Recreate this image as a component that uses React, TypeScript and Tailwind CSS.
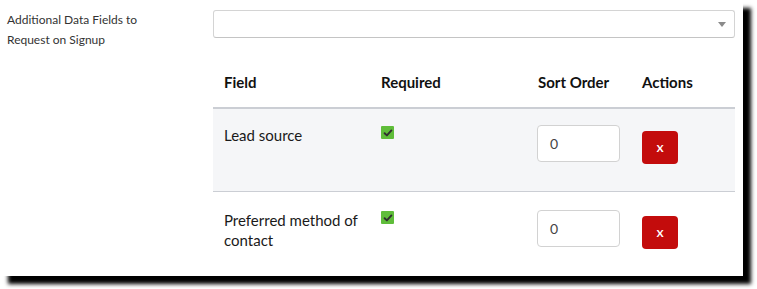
import React from 'react';

const rows = [
  { id: 1, name: ['Lead source'], required: true, order: 0, shaded: true },
  { id: 2, name: ['Preferred method of', 'contact'], required: true, order: 0, shaded: false },
];

function Check() {
  return (
    <span className="mt-[1px] flex h-[13px] w-[13px] items-center justify-center rounded-[1px] bg-[#5fbd3a]">
      <svg width="10" height="10" viewBox="0 0 10 10">
        <path d="M1.6 5.2 L3.9 7.4 L8.4 2.4" fill="none" stroke="#2f2f2f" strokeWidth="1.9" strokeLinecap="round" strokeLinejoin="round" />
      </svg>
    </span>
  );
}

export default function App() {
  return (
    <div className="relative h-[289px] w-[757px] bg-white font-['Lato','Liberation_Sans',sans-serif]">
      <div className="flex h-[276px] w-[743px] bg-white shadow-[8px_8px_4px_rgba(0,0,0,1)]">
        {/* label column */}
        <div className="w-[213px] shrink-0 pl-[7px] pt-[10px] text-[12px] leading-[20px] text-[#333]">
          Additional Data Fields to
          <br />
          Request on Signup
        </div>

        {/* field column */}
        <div className="w-[522px] pt-[10px]">
          <div className="relative h-[28px] rounded-[3px] border border-[#d4d4d4] border-b-[#c4c4c4] bg-white">
            <span className="absolute right-[8px] top-[11px] h-0 w-0 border-x-[4px] border-t-[5px] border-x-transparent border-t-[#8a8a8a]" />
          </div>

          <div className="mt-[22px]">
            {/* header */}
            <div className="grid h-[49px] grid-cols-[157px_157px_104px_104px] items-center border-b-2 border-[#cbced4] pb-[2px] text-[15px] font-bold text-[#111]">
              <div className="pl-[11px]">Field</div>
              <div className="pl-[11px]">Required</div>
              <div className="pl-[11px]">Sort Order</div>
              <div className="pl-[11px]">Actions</div>
            </div>

            {rows.map((r) => (
              <div
                key={r.id}
                className={`grid h-[83px] grid-cols-[157px_157px_104px_104px] items-start text-[15px] leading-[20px] text-[#1a1a1a] ${
                  r.shaded ? 'border-b border-[#cbced4] bg-[#f5f6f8] pt-[16px]' : 'bg-white pt-[18px]'
                }`}
              >
                <div className="pl-[11px]">
                  {r.name.map((line, i) => (
                    <div key={i}>{line}</div>
                  ))}
                </div>
                <div className="pl-[11px]">{r.required && <Check />}</div>
                <div className="pl-[10px]">
                  <div className="flex h-[37px] w-[83px] items-center rounded-[4px] border border-[#d2d2d2] bg-white pl-[12px] text-[14px] text-[#444]">
                    {r.order}
                  </div>
                </div>
                <div className="pl-[11px] pt-[6px]">
                  <button className="flex h-[33px] w-[36px] items-center justify-center rounded-[4px] bg-[#c30c0c] pb-[1px] text-[14px] font-semibold leading-none text-white">
                    x
                  </button>
                </div>
              </div>
            ))}
          </div>
        </div>
      </div>
    </div>
  );
}
